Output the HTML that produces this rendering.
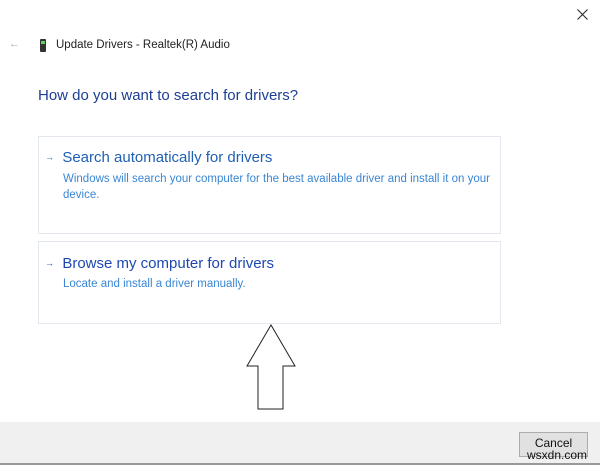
<!DOCTYPE html>
<html><head><style>
body{margin:0;width:600px;height:465px;background:#fff;font-family:"Liberation Sans",sans-serif;position:relative;overflow:hidden}
.a{position:absolute;white-space:nowrap}
.card{position:absolute;left:38px;width:463px;border:1px solid #e3e8ee;box-sizing:border-box}
.t{color:#1f5fb4;font-size:15px}
.s{color:#3a86d4;font-size:11.5px;line-height:16px}
</style></head><body>
<svg class="a" style="left:577px;top:9px" width="11" height="11"><path d="M0.5 0.5L10.5 10.5M10.5 0.5L0.5 10.5" stroke="#333" stroke-width="1.2"/></svg>
<div class="a" style="left:9px;top:38px;font-size:11px;color:#aaa">←</div>
<div class="a" style="left:40px;top:39px;width:6px;height:13px;background:#333;border-radius:1px"><div style="margin:2px 1px;width:4px;height:3px;background:#6c6"></div></div>
<div class="a" style="left:56px;top:39px;font-size:11.5px;color:#222">Update Drivers - Realtek(R) Audio</div>
<div class="a" style="left:38px;top:87px;font-size:15px;color:#1c3f94">How do you want to search for drivers?</div>
<div class="card" style="top:136px;height:98px"></div>
<div class="a t" style="left:45px;top:149px"><span style="font-size:9px;position:relative;top:-2px">→</span>&nbsp; Search automatically for drivers</div>
<div class="a s" style="left:63px;top:171px">Windows will search your computer for the best available driver and install it on your<br>device.</div>
<div class="card" style="top:241px;height:83px"></div>
<div class="a t" style="left:45px;top:255px;color:#1e48b0"><span style="font-size:9px;position:relative;top:-2px">→</span>&nbsp; Browse my computer for drivers</div>
<div class="a s" style="left:63px;top:276px">Locate and install a driver manually.</div>
<svg class="a" style="left:0;top:0" width="600" height="465"><path d="M271 325 L247 366 L258 366 L258 409 L283 409 L283 366 L295 366 Z" fill="#fff" stroke="#222" stroke-width="1"/></svg>
<div class="a" style="left:0;top:422px;width:600px;height:43px;background:#f0f0f0;border-bottom:2px solid #999;box-sizing:border-box"></div>
<div class="a" style="left:519px;top:432px;width:69px;height:25px;background:#e1e1e1;border:1px solid #adadad;box-sizing:border-box;font-size:12px;text-align:center;line-height:20px;color:#111">Cancel</div>
<div class="a" style="left:527px;top:449px;font-size:12px;color:#111;line-height:12px">wsxdn.com</div>
</body></html>
